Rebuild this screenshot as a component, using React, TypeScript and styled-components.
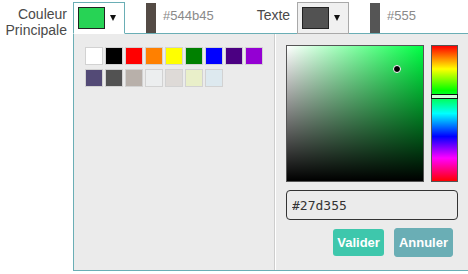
import React from 'react';
import styled, { createGlobalStyle } from 'styled-components';

const GlobalStyle = createGlobalStyle`
  * {
    box-sizing: border-box;
  }
  html,
  body {
    margin: 0;
    overflow: hidden;
    background: #fff;
    font-family: 'Liberation Sans', Arial, sans-serif;
  }
`;

const TEAL = '#6aaeb5';

const swatches = [
  '#ffffff', '#000000', '#ff0000', '#ff8000', '#ffff00', '#008000', '#0000ff', '#4b0082', '#9400d3',
  '#534a76', '#525252', '#b8b0aa', '#eceeef', '#dedad7', '#e9efc9', '#dde9ef',
];

const Arrow = () => (
  <svg width="6" height="6" viewBox="0 0 6 6">
    <polygon points="0,0 6,0 3,6" fill="#111" />
  </svg>
);

const App = () => {
  return (
    <>
      <GlobalStyle />
      <Toolbar>
        <Label $width={67} $top={6}>
          Couleur Principale
        </Label>
        <SelectWrap>
          <Select $open>
            <Swatch $color="#27d355" />
            <Arrow />
          </Select>
          <Popup>
            <PalettePane>
              <SwatchGrid>
                {swatches.map((c) => (
                  <PaletteSwatch key={c} $color={c} />
                ))}
              </SwatchGrid>
            </PalettePane>
            <PickerPane>
              <PickerRow>
                <SatVal $hue={136}>
                  <SatValDot style={{ left: 106, top: 19 }} />
                </SatVal>
                <HueBar>
                  <HueMarker style={{ top: 48 }} />
                </HueBar>
              </PickerRow>
              <HexInput value="#27d355" readOnly />
              <Actions>
                <Button $bg="#3ec7ac">Valider</Button>
                <Button $bg={TEAL} $bordered>
                  Annuler
                </Button>
              </Actions>
            </PickerPane>
          </Popup>
        </SelectWrap>
        <ColorBar $color="#544b45" />
        <HexText>#544b45</HexText>

        <Label $top={7} $left={43} $gap={7}>
          Texte
        </Label>
        <SelectWrap>
          <Select>
            <Swatch $color="#525252" />
            <Arrow />
          </Select>
        </SelectWrap>
        <ColorBar $color="#555555" />
        <HexText>#555</HexText>
      </Toolbar>
    </>
  );
};

export default App;

const Toolbar = styled.div`
  display: flex;
  align-items: flex-start;
  height: 274px;
`;

const Label = styled.div<{ $width?: number; $top: number; $left?: number; $gap?: number }>`
  width: ${(p) => (p.$width ? `${p.$width}px` : 'auto')};
  margin: ${(p) => p.$top}px ${(p) => p.$gap ?? 6}px 0 ${(p) => p.$left ?? 0}px;
  text-align: right;
  font-size: 14px;
  line-height: 16px;
  color: #4a4a4a;
`;

const SelectWrap = styled.div`
  position: relative;
  margin-top: 2px;
`;

const Select = styled.div<{ $open?: boolean }>`
  position: relative;
  z-index: 2;
  display: flex;
  align-items: center;
  gap: 5px;
  height: 32px;
  padding: 0 8px 0 4px;
  border: 1px solid ${(p) => (p.$open ? TEAL : '#a9a9a9')};
  border-bottom-color: ${(p) => (p.$open ? '#fff' : '#a9a9a9')};
  background: ${(p) => (p.$open ? '#fff' : '#f0f0f0')};
`;

const Swatch = styled.div<{ $color: string }>`
  width: 27px;
  height: 22px;
  border: 1px solid #222;
  background: ${(p) => p.$color};
`;

const ColorBar = styled.div<{ $color: string }>`
  width: 10px;
  height: 31px;
  margin: 3px 0 0 21px;
  background: ${(p) => p.$color};
`;

const HexText = styled.div`
  margin: 8px 0 0 7px;
  font-size: 13px;
  line-height: 16px;
  color: #8a8a8a;
`;

const Popup = styled.div`
  position: absolute;
  top: 31px;
  left: 0;
  z-index: 1;
  display: flex;
  width: 400px;
  height: 238px;
  border: 1px solid ${TEAL};
  background: #ebebeb;
`;

const PalettePane = styled.div`
  width: 201px;
  padding: 13px 0 0 11px;
  border-right: 1px solid #cdcdcd;
`;

const SwatchGrid = styled.div`
  display: grid;
  grid-template-columns: repeat(9, 18px);
  grid-auto-rows: 18px;
  column-gap: 2px;
  row-gap: 4px;
`;

const PaletteSwatch = styled.div<{ $color: string }>`
  border: 1px solid #d2d2d2;
  background: ${(p) => p.$color};
`;

const PickerPane = styled.div`
  display: flex;
  flex-direction: column;
  padding: 11px 0 0 10px;
  border-left: 1px solid #fff;
`;

const PickerRow = styled.div`
  display: flex;
  gap: 7px;
`;

const SatVal = styled.div<{ $hue: number }>`
  position: relative;
  width: 138px;
  height: 137px;
  border: 1px solid #555;
  background: linear-gradient(to top, #000, rgba(0, 0, 0, 0)),
    linear-gradient(to right, #fff, hsl(${(p) => p.$hue}, 100%, 50%));
`;

const SatValDot = styled.div`
  position: absolute;
  width: 8px;
  height: 8px;
  border-radius: 50%;
  border: 1px solid #fff;
  background: #000;
`;

const HueBar = styled.div`
  position: relative;
  width: 27px;
  height: 137px;
  border: 1px solid #555;
  background: linear-gradient(
    to bottom,
    #f00 0%,
    #ff0 17%,
    #0f0 33%,
    #0ff 50%,
    #00f 67%,
    #f0f 83%,
    #f00 100%
  );
`;

const HueMarker = styled.div`
  position: absolute;
  left: -1px;
  right: -1px;
  height: 5px;
  border: 1px solid #111;
  background: rgba(255, 255, 255, 0.8);
`;

const HexInput = styled.input`
  width: 172px;
  height: 30px;
  margin-top: 8px;
  padding: 0 5px;
  border: 1px solid #333;
  border-radius: 4px;
  background: #ebebeb;
  font-family: 'DejaVu Sans Mono', monospace;
  font-size: 13px;
  color: #333;
  outline: none;
`;

const Actions = styled.div`
  display: flex;
  justify-content: flex-end;
  align-items: center;
  gap: 10px;
  width: 172px;
  margin-top: 8px;
  padding-right: 5px;
`;

const Button = styled.button<{ $bg: string; $bordered?: boolean }>`
  padding: 6px 4px;
  border: ${(p) => (p.$bordered ? `1px solid ${p.$bg}` : 'none')};
  border-radius: 3px;
  background: ${(p) => p.$bg};
  font-family: 'Liberation Sans', Arial, sans-serif;
  font-size: 13px;
  font-weight: bold;
  line-height: 15px;
  color: #fff;
`;
